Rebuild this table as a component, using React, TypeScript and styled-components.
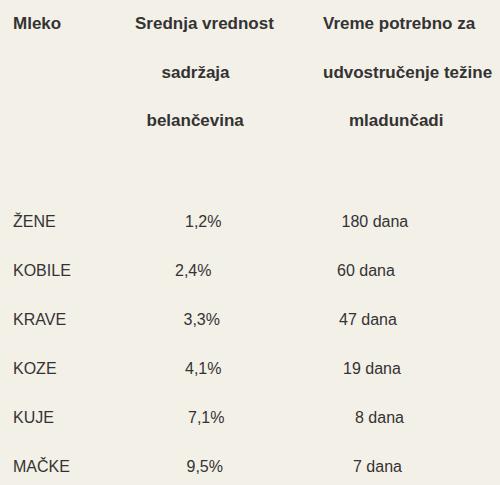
import React from "react";
import styled, { createGlobalStyle } from "styled-components";

const Global = createGlobalStyle`
  html, body {
    margin: 0;
    padding: 0;
    background: #f3f0e8;
  }
  body {
    font-family: "Liberation Sans", Arial, sans-serif;
    color: #333333;
  }
`;

const Page = styled.div`
  width: 500px;
  height: 485px;
  background: #f3f0e8;
  padding-left: 13px;
  box-sizing: border-box;
  overflow: hidden;
  display: flex;
  flex-direction: column;
`;

const Columns = styled.div`
  display: grid;
  grid-template-columns: 122px 188px 1fr;
`;

const HeaderRow = styled(Columns)``;

const HeaderCell = styled.div`
  display: flex;
  flex-direction: column;
`;

const HeaderLine = styled.div<{ $indent?: number }>`
  font-size: 17px;
  font-weight: bold;
  line-height: 48.5px;
  height: 48.5px;
  white-space: nowrap;
  padding-left: ${(p) => p.$indent ?? 0}px;
`;

const Body = styled.div`
  display: flex;
  flex-direction: column;
  margin-top: 51px;
`;

const DataRow = styled(Columns)`
  height: 49px;
`;

const DataCell = styled.div<{ $indent?: number }>`
  font-size: 16px;
  line-height: 49px;
  white-space: nowrap;
  padding-left: ${(p) => p.$indent ?? 0}px;
`;

type Row = {
  name: string;
  protein: string;
  pIndent: number;
  time: string;
  tIndent: number;
};

const rows: Row[] = [
  { name: "ŽENE", protein: "1,2%", pIndent: 50, time: "180 dana", tIndent: 18.5 },
  { name: "KOBILE", protein: "2,4%", pIndent: 40, time: "60 dana", tIndent: 14 },
  { name: "KRAVE", protein: "3,3%", pIndent: 48.5, time: "47 dana", tIndent: 16 },
  { name: "KOZE", protein: "4,1%", pIndent: 50, time: "19 dana", tIndent: 20 },
  { name: "KUJE", protein: "7,1%", pIndent: 53, time: "8 dana", tIndent: 32 },
  { name: "MAČKE", protein: "9,5%", pIndent: 51.5, time: "7 dana", tIndent: 30 },
];

export default function App() {
  return (
    <>
      <Global />
      <Page>
        <HeaderRow>
          <HeaderCell>
            <HeaderLine>Mleko</HeaderLine>
          </HeaderCell>
          <HeaderCell>
            <HeaderLine>Srednja vrednost</HeaderLine>
            <HeaderLine $indent={26.5}>sadržaja</HeaderLine>
            <HeaderLine $indent={11.5}>belančevina</HeaderLine>
          </HeaderCell>
          <HeaderCell>
            <HeaderLine>Vreme potrebno za</HeaderLine>
            <HeaderLine>udvostručenje težine</HeaderLine>
            <HeaderLine $indent={26}>mladunčadi</HeaderLine>
          </HeaderCell>
        </HeaderRow>
        <Body>
          {rows.map((r) => (
            <DataRow key={r.name}>
              <DataCell>{r.name}</DataCell>
              <DataCell $indent={r.pIndent}>{r.protein}</DataCell>
              <DataCell $indent={r.tIndent}>{r.time}</DataCell>
            </DataRow>
          ))}
        </Body>
      </Page>
    </>
  );
}
